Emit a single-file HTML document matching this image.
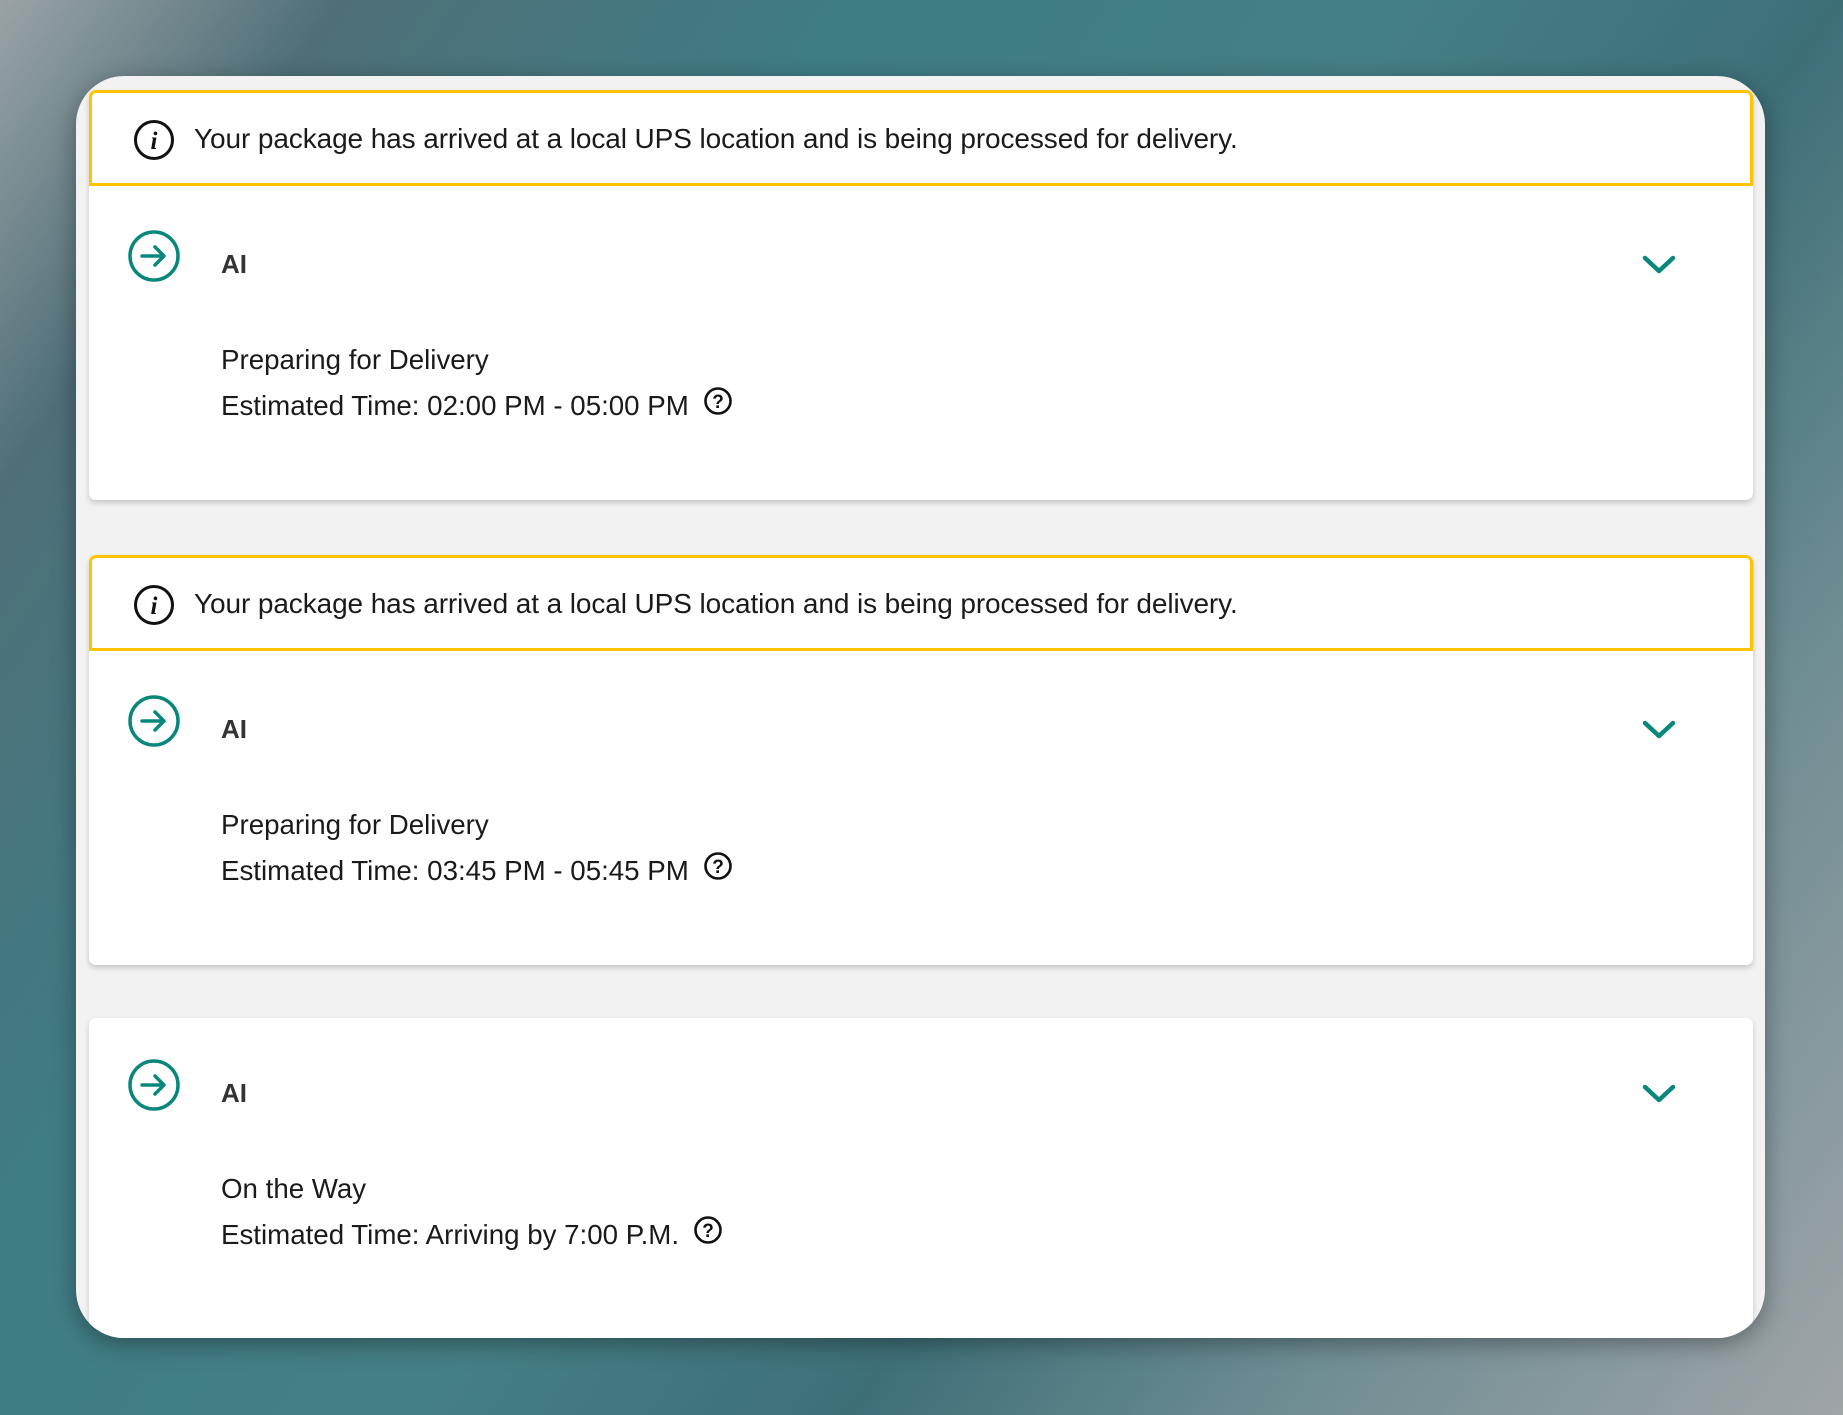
<!DOCTYPE html>
<html><head><meta charset="utf-8"><style>
*{margin:0;padding:0;box-sizing:border-box}
body{width:1843px;height:1415px;overflow:hidden;position:relative;font-family:"Liberation Sans",sans-serif;
background:linear-gradient(125deg,#9aa3a6 0%,#4f6f78 12%,#3f7c84 30%,#457f86 50%,#3e6f78 65%,#6e8d93 80%,#a0a5a8 100%);}
.wrap{position:absolute;left:76px;top:76px;width:1689px;height:1262px;background:#f2f2f2;border-radius:48px;box-shadow:0 6px 24px rgba(0,0,0,.35);overflow:hidden}
.card{position:absolute;left:13px;width:1664px;background:#fff;border-radius:7px;box-shadow:0 3px 6px rgba(0,0,0,.18)}
.ban{position:absolute;left:0;top:0;width:100%;height:96px;border:3px solid #ffc400;border-radius:7px 7px 0 0}
.ban .t{position:absolute;left:102px;top:30px;font-size:28px;color:#1a1a1a;letter-spacing:-0.1px}
.ban svg{position:absolute;left:41px;top:26px}
.row{position:absolute;left:0;width:100%}
.arr{position:absolute;left:38px;top:0}
.ai{position:absolute;left:132px;top:20px;font-size:26px;font-weight:bold;color:#333}
.chev{position:absolute;left:1552px;top:24px}
.l1,.l2{position:absolute;left:132px;font-size:27.7px;color:#1a1a1a}
.q{display:inline-block;vertical-align:top;margin-left:14px;margin-top:-4px}
</style></head><body>
<div class="wrap">
<!-- card1 -->
<div class="card" style="top:14px;height:410px">
 <div class="ban"><svg width="42" height="42" viewBox="0 0 42 42"><circle cx="21" cy="21" r="18.5" fill="none" stroke="#111" stroke-width="3"/><text x="21" y="30" text-anchor="middle" font-family="Liberation Serif" font-style="italic" font-weight="bold" font-size="25" fill="#111">i</text></svg><div class="t">Your package has arrived at a local UPS location and is being processed for delivery.</div></div>
 <div class="row" style="top:139px">
  <svg class="arr" width="54" height="54" viewBox="0 0 54 54"><circle cx="27" cy="27" r="24" fill="none" stroke="#0a877b" stroke-width="3.5"/><path d="M15 27H37M28 18L37 27L28 36" fill="none" stroke="#0a877b" stroke-width="3.5" stroke-linecap="round" stroke-linejoin="round"/></svg>
  <div class="ai">AI</div>
  <svg class="chev" width="36" height="24" viewBox="0 0 36 24"><path d="M4 5L18 18L32 5" fill="none" stroke="#0a877b" stroke-width="4.5" stroke-linecap="round" stroke-linejoin="round"/></svg>
  <div class="l1" style="top:115px">Preparing for Delivery</div>
  <div class="l2" style="top:161px">Estimated Time: 02:00 PM - 05:00 PM<svg class="q" width="30" height="30" viewBox="0 0 30 30"><circle cx="15" cy="15" r="12.5" fill="none" stroke="#111" stroke-width="2.6"/><text x="15" y="22" text-anchor="middle" font-weight="bold" font-size="19" fill="#111">?</text></svg></div>
 </div>
</div>
<!-- card2 -->
<div class="card" style="top:479px;height:410px">
 <div class="ban"><svg width="42" height="42" viewBox="0 0 42 42"><circle cx="21" cy="21" r="18.5" fill="none" stroke="#111" stroke-width="3"/><text x="21" y="30" text-anchor="middle" font-family="Liberation Serif" font-style="italic" font-weight="bold" font-size="25" fill="#111">i</text></svg><div class="t">Your package has arrived at a local UPS location and is being processed for delivery.</div></div>
 <div class="row" style="top:139px">
  <svg class="arr" width="54" height="54" viewBox="0 0 54 54"><circle cx="27" cy="27" r="24" fill="none" stroke="#0a877b" stroke-width="3.5"/><path d="M15 27H37M28 18L37 27L28 36" fill="none" stroke="#0a877b" stroke-width="3.5" stroke-linecap="round" stroke-linejoin="round"/></svg>
  <div class="ai">AI</div>
  <svg class="chev" width="36" height="24" viewBox="0 0 36 24"><path d="M4 5L18 18L32 5" fill="none" stroke="#0a877b" stroke-width="4.5" stroke-linecap="round" stroke-linejoin="round"/></svg>
  <div class="l1" style="top:115px">Preparing for Delivery</div>
  <div class="l2" style="top:161px">Estimated Time: 03:45 PM - 05:45 PM<svg class="q" width="30" height="30" viewBox="0 0 30 30"><circle cx="15" cy="15" r="12.5" fill="none" stroke="#111" stroke-width="2.6"/><text x="15" y="22" text-anchor="middle" font-weight="bold" font-size="19" fill="#111">?</text></svg></div>
 </div>
</div>
<!-- card3 -->
<div class="card" style="top:942px;height:320px">
 <div class="row" style="top:40px">
  <svg class="arr" width="54" height="54" viewBox="0 0 54 54"><circle cx="27" cy="27" r="24" fill="none" stroke="#0a877b" stroke-width="3.5"/><path d="M15 27H37M28 18L37 27L28 36" fill="none" stroke="#0a877b" stroke-width="3.5" stroke-linecap="round" stroke-linejoin="round"/></svg>
  <div class="ai">AI</div>
  <svg class="chev" width="36" height="24" viewBox="0 0 36 24"><path d="M4 5L18 18L32 5" fill="none" stroke="#0a877b" stroke-width="4.5" stroke-linecap="round" stroke-linejoin="round"/></svg>
  <div class="l1" style="top:115px">On the Way</div>
  <div class="l2" style="top:161px">Estimated Time: Arriving by 7:00 P.M.<svg class="q" width="30" height="30" viewBox="0 0 30 30"><circle cx="15" cy="15" r="12.5" fill="none" stroke="#111" stroke-width="2.6"/><text x="15" y="22" text-anchor="middle" font-weight="bold" font-size="19" fill="#111">?</text></svg></div>
 </div>
</div>
</div>
</body></html>
